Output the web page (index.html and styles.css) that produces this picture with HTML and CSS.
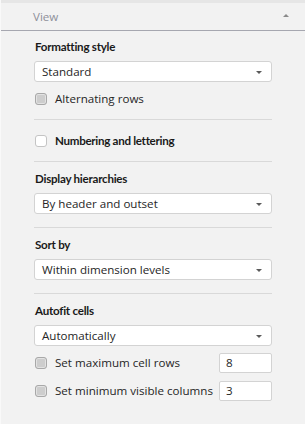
FILE: index.html
```html
<!DOCTYPE html>
<html>
<head>
<meta charset="utf-8">
<link rel="stylesheet" href="styles.css">
</head>
<body>
<div class="panel">
  <div class="topstrip"></div>
  <div class="header">
    <span class="header-title">View</span>
    <span class="caret-up"></span>
  </div>
  <div class="content">
    <section class="sec sec-first">
      <div class="label">Formatting style</div>
      <div class="select"><span>Standard</span><span class="caret-down"></span></div>
      <div class="row"><span class="cb cb-gray"></span><span class="row-text">Alternating rows</span></div>
    </section>
    <section class="sec sec-single">
      <div class="row row-single"><span class="cb cb-white"></span><span class="row-text bold">Numbering and lettering</span></div>
    </section>
    <section class="sec">
      <div class="label">Display hierarchies</div>
      <div class="select"><span>By header and outset</span><span class="caret-down"></span></div>
    </section>
    <section class="sec">
      <div class="label">Sort by</div>
      <div class="select"><span>Within dimension levels</span><span class="caret-down"></span></div>
    </section>
    <section class="sec sec-last">
      <div class="label">Autofit cells</div>
      <div class="select"><span>Automatically</span><span class="caret-down"></span></div>
      <div class="row"><span class="cb cb-gray"></span><span class="row-text grow">Set maximum cell rows</span><span class="num">8</span></div>
      <div class="row row-2"><span class="cb cb-gray"></span><span class="row-text grow">Set minimum visible columns</span><span class="num">3</span></div>
    </section>
  </div>
</div>
</body>
</html>
```

FILE: styles.css
```css
html, body {
  margin: 0;
  padding: 0;
}
body {
  background: #f2f2f2;
  font-family: "Open Sans", "Liberation Sans", sans-serif;
  font-size: 11.6px;
  color: #333;
  width: 305px;
  height: 424px;
  overflow: hidden;
}
.panel {
  height: 424px;
  border-left: 1px solid #f9f9f9;
  box-sizing: border-box;
}
.topstrip {
  height: 3px;
  background: #e6e6e6;
}
.header {
  height: 27px;
  display: flex;
  align-items: center;
  justify-content: space-between;
  padding: 0 16px 0 32px;
  border-bottom: 1px solid #a6a7b0;
  background: #f2f2f2;
}
.header-title {
  color: #8e909a;
  font-size: 11.6px;
  line-height: 16px;
}
.caret-up {
  width: 0;
  height: 0;
  border-left: 3px solid transparent;
  border-right: 3px solid transparent;
  border-bottom: 3px solid #8a8a8a;
  margin-top: -2px;
}
.content {
  margin: 0 33px 0 33px;
}
.sec {
  padding: 9px 0 13px;
  border-top: 1px solid #d9d9d9;
}
.sec-first {
  border-top: none;
  padding: 8px 0 10px;
}
.sec-single {
  padding: 11px 0 10px;
}
.sec-last {
  border-top: 1px solid #d9d9d9;
}
.label {
  font-family: Lato, "Liberation Sans", sans-serif;
  font-weight: 700;
  font-size: 11.6px;
  letter-spacing: -0.25px;
  line-height: 16px;
  color: #1a1a1a;
  padding-left: 1px;
}
.select {
  margin-top: 6px;
  height: 21px;
  box-sizing: border-box;
  background: #fff;
  border: 1px solid #d3d3d3;
  border-radius: 3px;
  display: flex;
  align-items: center;
  justify-content: space-between;
  padding: 0 9px 0 7px;
  line-height: 19px;
  color: #262626;
}
.caret-down {
  width: 0;
  height: 0;
  border-left: 3px solid transparent;
  border-right: 3px solid transparent;
  border-top: 3px solid #5a5a5a;
  margin-top: 1px;
}
.row {
  margin-top: 7px;
  height: 20px;
  display: flex;
  align-items: center;
}
.row-2 {
  margin-top: 8px;
}
.row-single {
  margin-top: 0;
}
.cb {
  width: 12px;
  height: 12px;
  box-sizing: border-box;
  border-radius: 3px;
  margin-left: 1px;
  margin-right: 8px;
  flex: none;
}
.cb-gray {
  border: 1px solid #a8a8a8;
  background: #cdcdcd;
  box-shadow: inset 0 0 0 1px #e2e2e2;
}
.cb-white {
  border: 1px solid #c4c4c4;
  background: #fff;
}
.row-text {
  line-height: 16px;
  color: #262626;
}
.row-text.bold {
  font-family: Lato, "Liberation Sans", sans-serif;
  font-weight: 700;
  font-size: 11.6px;
  letter-spacing: -0.3px;
  color: #1a1a1a;
}
.grow {
  flex: 1;
}
.num {
  width: 53px;
  height: 20px;
  box-sizing: border-box;
  background: #fff;
  border: 1px solid #d3d3d3;
  border-radius: 2px;
  padding-left: 6px;
  line-height: 18px;
  color: #262626;
  flex: none;
}
```
